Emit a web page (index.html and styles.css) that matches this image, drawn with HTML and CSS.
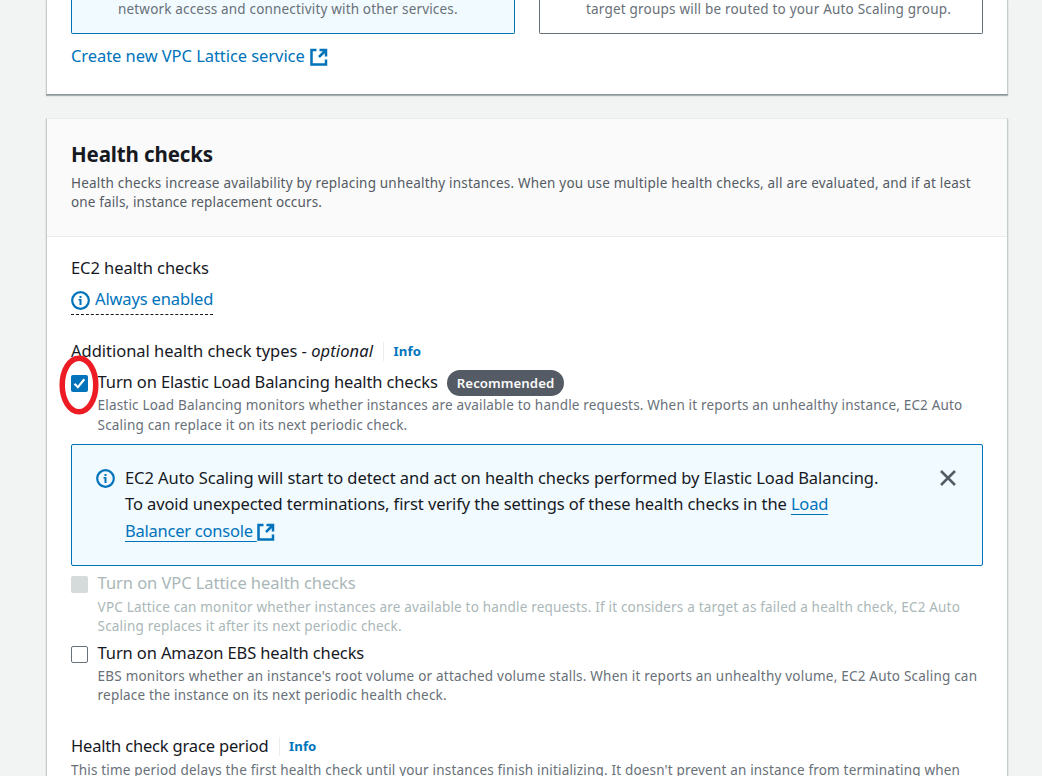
FILE: index.html
```html
<!DOCTYPE html>
<html lang="en">
<head>
<meta charset="utf-8">
<title>Create Auto Scaling group</title>
<link rel="stylesheet" href="styles.css">
</head>
<body>
<svg class="defs" aria-hidden="true">
  <symbol id="external" viewBox="0 0 18 18"><path d="M6.500 2H1.500v14.500h14.500v-5M9.500 2H16v6.500M15.500 2.500l-6.500 6.500" fill="none" stroke="currentColor" stroke-width="2.500"/></symbol>
  <symbol id="info" viewBox="0 0 19 19"><circle cx="9.500" cy="9.500" r="8.300" fill="none" stroke="currentColor" stroke-width="2.200"/><path d="M8.500 5h2v2h-2zM7.500 8h3v6h-2V9.500h-1z" fill="currentColor"/></symbol>
</svg>
<main class="page">
  <section class="card card-top">
    <div class="options">
      <div class="option option-selected"><p class="small ls-a">network access and connectivity with other services.</p></div>
      <div class="option"><p class="small ls-b">target groups will be routed to your Auto Scaling group.</p></div>
    </div>
    <a class="text link create"><span>Create new VPC Lattice service</span><svg class="ext"><use href="#external"/></svg></a>
  </section>

  <section class="card">
    <header class="card-header">
      <h2 class="title">Health checks</h2>
      <p class="small desc">Health checks increase availability by replacing unhealthy instances. When you use multiple health checks, all are evaluated, and if at least<br><span class="ls-f">one fails, instance replacement occurs.</span></p>
    </header>
    <div class="card-body">
      <div class="text ec2">EC2 health checks</div>
      <div class="status"><svg class="info-icon"><use href="#info"/></svg><span class="text link always">Always enabled</span></div>

      <div class="label-row additional"><span class="text types">Additional health check types - <i>optional</i></span><a class="info">Info</a></div>

      <div class="check elb">
        <span class="box box-checked"><svg viewBox="0 0 17 17"><path d="M3.500 8.800l3.400 3.400 6.400-7.900" fill="none" stroke="#fff" stroke-width="2.200"/></svg>
          <svg class="ring" viewBox="0 0 40 60"><ellipse cx="20" cy="30" rx="16.800" ry="26.800" fill="none" stroke="#ed1c24" stroke-width="5.500"/></svg></span>
        <div>
          <div class="check-title"><span class="text ls-c">Turn on Elastic Load Balancing health checks</span><span class="badge">Recommended</span></div>
          <p class="small">Elastic Load Balancing monitors whether instances are available to handle requests. When it reports an unhealthy instance, EC2 Auto<br>Scaling can replace it on its next periodic check.</p>
        </div>
      </div>

      <div class="alert">
        <svg class="info-icon"><use href="#info"/></svg>
        <p class="alert-text">EC2 Auto Scaling will start to detect and act on health checks performed by Elastic Load Balancing.<br><span class="avoid">To avoid unexpected terminations, first verify the settings of these health checks in the </span><a class="under">Load</a><br><a class="under balancer">Balancer console&nbsp;</a><svg class="ext"><use href="#external"/></svg></p>
        <svg class="close" viewBox="0 0 16 16"><path d="M1 1l14 14M15 1L1 15" stroke="#545b64" stroke-width="2.500"/></svg>
      </div>

      <div class="check vpc">
        <span class="box box-disabled"></span>
        <div>
          <div class="text">Turn on VPC Lattice health checks</div>
          <p class="small">VPC Lattice can monitor whether instances are available to handle requests. If it considers a target as failed a health check, EC2 Auto<br>Scaling replaces it after its next periodic check.</p>
        </div>
      </div>

      <div class="check ebs">
        <span class="box"></span>
        <div>
          <div class="text ls-c">Turn on Amazon EBS health checks</div>
          <p class="small"><span class="ls-d">EBS monitors whether an instance's root volume or attached volume stalls. When it reports an unhealthy volume, EC2 Auto Scaling can</span><br>replace the instance on its next periodic health check.</p>
        </div>
      </div>

      <div class="label-row grace"><span class="text ls-e">Health check grace period</span><a class="info">Info</a></div>
      <p class="small grace-desc">This time period delays the first health check until your instances finish initializing. It doesn't prevent an instance from terminating when</p>
    </div>
  </section>
</main>
</body>
</html>
```
FILE: styles.css
```css
* { box-sizing: border-box; }
html, body { height: 776px; overflow: hidden; }
body { margin: 0; background: #f2f3f3; color: #16191f; font-family: "Noto Sans", "Open Sans", sans-serif; }
p, h2 { margin: 0; }
svg { display: block; flex: none; }
.defs { position: absolute; width: 0; height: 0; }
.page { padding: 0 34px 0 46px; }

.card { border: 1px solid #c5cccd; border-top-color: #eaeded; background: #fff; box-shadow: 0 1px 1px rgba(0, 28, 36, .3); }
.card-top { height: 95px; border-top: 0; border-bottom-color: #879596; padding: 0 24px; margin-bottom: 23px; }
.card-header { background: #fafafa; border-bottom: 1px solid #eaeded; padding: 22px 24px 24px; }
.card-body { padding: 20px 24px; }

.title { font-size: 20.5px; line-height: 26px; font-weight: 700; letter-spacing: -.12px; margin-bottom: 7px; }
.text { font-size: 16.5px; line-height: 22px; letter-spacing: -.062px; white-space: nowrap; }
.small { font-size: 13.5px; line-height: 19.2px; letter-spacing: .187px; color: #687078; white-space: nowrap; }
.desc { color: #545b64; letter-spacing: .195px; height: 38px; }
.link { color: #0073bb; }
.ls-a { letter-spacing: .174px; }
.ls-b { letter-spacing: .2px; }
.ls-c { letter-spacing: -.125px; }
.ls-d { letter-spacing: .212px; }
.ls-e { letter-spacing: -.18px; }
.ls-f { letter-spacing: .14px; }

.options { display: flex; gap: 24px; }
.option { flex: 1; height: 34px; padding-left: 46px; border: 1px solid #687078; border-top: 0; border-radius: 0 0 2px 2px; }
.option-selected { border-color: #0073bb; background: #f1faff; }
.create { display: flex; gap: 5px; margin-top: 11px; }
.ext { width: 18px; height: 18px; color: #0073bb; }
.create .ext { margin-top: 3px; }

.status { display: inline-flex; gap: 5px; height: 27px; margin-top: 9px; border-bottom: 1px dashed #16191f; }
.info-icon { width: 19px; height: 19px; color: #0073bb; }
.status .info-icon { margin-top: 3px; }
.always { letter-spacing: -.15px; }

.label-row { display: flex; align-items: center; height: 22px; }
.additional { margin-top: 25px; }
.types { letter-spacing: -.02px; }
.types i { letter-spacing: .1px; }
.info { margin-top: 1px; margin-left: 10px; padding-left: 9.5px; border-left: 1px solid #eaeded; font-size: 13.2px; line-height: 19px; font-weight: 700; letter-spacing: .1px; color: #0073bb; }

.check { display: flex; gap: 9.6px; }
.check .small { height: 38px; }
.box { position: relative; flex: none; width: 17px; height: 17px; margin-top: 4px; border: 1px solid #687078; border-radius: 2px; background: #fff; }
.box-checked { border: 0; background: #0073bb; }
.box-disabled { border: 0; background: #d5dbdb; }
.ring { position: absolute; left: -12px; top: -20px; width: 40px; height: 60px; }
.elb { margin-top: 9px; }
.elb .small { margin-top: 3px; line-height: 19.6px; }
.check-title { display: flex; align-items: center; height: 22px; }
.badge { height: 26px; margin-left: 9px; padding: 0 10px; border-radius: 13px; background: #545b64; color: #fafafa; font-size: 13.2px; line-height: 26px; font-weight: 600; letter-spacing: .08px; margin-top: 2px; }
.vpc { margin-top: 6px; }
.vpc .text, .vpc .small { color: #aab7b8; }
.vpc .small { margin-top: 4px; }
.ebs { margin-top: 6px; }
.ebs .small { margin-top: 3px; }

.alert { display: flex; height: 122px; margin-top: 10px; padding: 20px 26.500px 0 24px; border: 1px solid #0073bb; border-radius: 2px; background: #f1faff; }
.alert .info-icon { margin: 4px 10px 0 0; }
.alert-text { flex: 1; font-size: 16.5px; line-height: 26.4px; letter-spacing: -.058px; white-space: nowrap; }
.avoid { letter-spacing: -.1px; }
.under { color: #0073bb; text-decoration: underline 1px; text-underline-offset: 4px; text-decoration-skip-ink: none; letter-spacing: -.2px; }
.balancer { letter-spacing: -.24px; }
.alert-text .ext { display: inline-block; vertical-align: -4px; margin-left: .5px; }
.close { width: 16px; height: 16px; margin-top: 5px; }

.grace { margin-top: 30px; }
.grace-desc { margin-top: 4px; letter-spacing: .182px; }
```
